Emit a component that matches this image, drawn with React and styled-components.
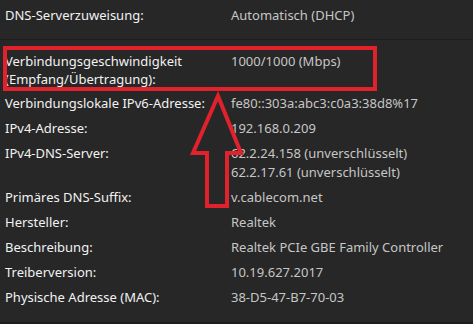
import React from "react";
import styled, { createGlobalStyle } from "styled-components";

const Global = createGlobalStyle`
  html, body { margin: 0; padding: 0; background: #272727; }
  body { width: 473px; height: 324px; overflow: hidden; }
  #root { width: 473px; height: 324px; }
`;

const Page = styled.div`
  position: relative;
  width: 473px;
  height: 324px;
  background: #272727;
  font-family: "Noto Sans", "Open Sans", sans-serif;
  font-size: 13px;
  line-height: 19px;
  box-sizing: border-box;
  border-bottom: 2px solid #1c1c1c;
  overflow: hidden;
`;

const Section = styled.div`
  display: flex;
  flex-direction: column;
  gap: 6px;
  padding: ${(p) => p.$pad};
  border-bottom: ${(p) => (p.$divider ? "1px solid #1e1e1e" : "none")};
`;

const Row = styled.div`
  display: grid;
  grid-template-columns: 226px 1fr;
  padding-left: 5px;
  line-height: ${(p) => (p.$tight ? "18px" : "19px")};
`;

const Label = styled.div`
  color: #f2f2f2;
  white-space: pre-line;
`;

const Value = styled.div`
  color: #c6c6c6;
  white-space: pre-line;
`;

const Highlight = styled.div`
  position: absolute;
  left: 3px;
  top: 46px;
  width: 374px;
  height: 45px;
  box-sizing: border-box;
  border: 4px solid #e1222c;
  pointer-events: none;
`;

const ArrowSvg = styled.svg`
  position: absolute;
  left: 0;
  top: 0;
  pointer-events: none;
`;

const rows = [
  ["Verbindungsgeschwindigkeit\n(Empfang/Übertragung):", "1000/1000 (Mbps)", true],
  ["Verbindungslokale IPv6-Adresse:", "fe80::303a:abc3:c0a3:38d8%17"],
  ["IPv4-Adresse:", "192.168.0.209"],
  ["IPv4-DNS-Server:", "62.2.24.158 (unverschlüsselt)\n62.2.17.61 (unverschlüsselt)"],
  ["Primäres DNS-Suffix:", "v.cablecom.net"],
  ["Hersteller:", "Realtek"],
  ["Beschreibung:", "Realtek PCIe GBE Family Controller"],
  ["Treiberversion:", "10.19.627.2017"],
  ["Physische Adresse (MAC):", "38-D5-47-B7-70-03"],
];

export default function App() {
  return (
    <Page>
      <Global />
      <Section $pad="5.5px 0 14.5px 0" $divider>
        <Row>
          <Label>DNS-Serverzuweisung:</Label>
          <Value>Automatisch (DHCP)</Value>
        </Row>
      </Section>
      <Section $pad="12px 0 0 0">
        {rows.map(([l, v, tight]) => (
          <Row key={l} $tight={tight}>
            <Label>{l}</Label>
            <Value>{v}</Value>
          </Row>
        ))}
      </Section>
      <Highlight />
      <ArrowSvg width="473" height="324" viewBox="0 0 473 324">
        <polygon
          points="218,96 241,153 227,153 227,206 207,206 207,153 193,153"
          fill="none"
          stroke="#e1222c"
          strokeWidth="4"
          strokeLinejoin="miter"
        />
      </ArrowSvg>
    </Page>
  );
}
